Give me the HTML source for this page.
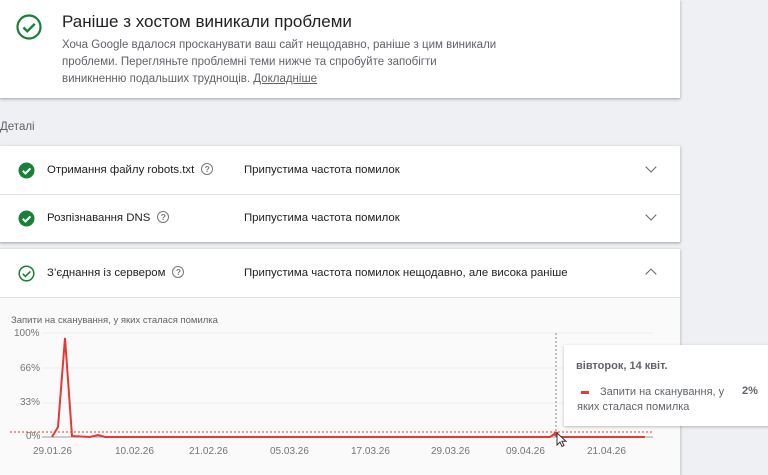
<!DOCTYPE html>
<html><head><meta charset="utf-8"><style>
*{margin:0;padding:0;box-sizing:border-box}
html,body{width:768px;height:475px;overflow:hidden}
body{background:#eef0f4;font-family:"Liberation Sans",sans-serif;position:relative;color:#202124}
.card{position:absolute;left:0;width:680px;background:#fff;box-shadow:0 1px 2px rgba(60,64,67,.3),0 1px 3px 1px rgba(60,64,67,.12)}
.a{position:absolute;white-space:nowrap}
.row{font-size:11.4px;color:#202124}
.q{display:inline-block;width:12px;height:12px;border:1.3px solid #777;border-radius:50%;font-size:8.5px;line-height:10px;text-align:center;color:#777;vertical-align:middle;margin-left:7px;margin-top:-2px;font-weight:bold}
.chev{position:absolute;left:647px;width:8px;height:8px;border-right:1.6px solid #5f6368;border-bottom:1.6px solid #5f6368}
.ax{font-size:10px;color:#757575;position:absolute}
</style></head><body>
<div class="card" style="top:0;height:98px">
<svg class="a" style="left:15px;top:13px" width="28" height="28" viewBox="0 0 28 28"><circle cx="14" cy="14" r="11.5" fill="none" stroke="#188038" stroke-width="2.2"/><path d="M8.5 14.5l3.8 3.8 7.5-7.5" fill="none" stroke="#188038" stroke-width="2.4"/></svg>
<div class="a" style="left:62px;top:12px;font-size:17px;color:#202124">Раніше з хостом виникали проблеми</div>
<div class="a" style="left:62px;top:37px;font-size:11.5px;color:#5f6368;line-height:17px;white-space:normal;width:440px">Хоча Google вдалося просканувати ваш сайт нещодавно, раніше з цим виникали проблеми. Перегляньте проблемні теми нижче та спробуйте запобігти виникненню подальших труднощів. <u>Докладніше</u></div>
</div>
<div class="a" style="left:0;top:121px;font-size:11.5px;color:#5f6368">Деталі</div>
<div class="card" style="top:146px;height:96px">
<div style="position:absolute;left:0;top:48px;width:680px;height:1px;background:#e0e0e0"></div>
</div>
<svg class="a" style="left:18px;top:162px" width="17" height="17"><circle cx="8.5" cy="8.5" r="8" fill="#188038"/><path d="M4.8 8.8l2.6 2.6 5-5" fill="none" stroke="#fff" stroke-width="2"/></svg>
<div class="a row" style="left:47px;top:164px">Отримання файлу robots.txt<span class="q">?</span></div>
<div class="a row" style="left:244px;top:164px">Припустима частота помилок</div>
<div class="chev" style="top:163px;transform:rotate(45deg)"></div>
<svg class="a" style="left:18px;top:210px" width="17" height="17"><circle cx="8.5" cy="8.5" r="8" fill="#188038"/><path d="M4.8 8.8l2.6 2.6 5-5" fill="none" stroke="#fff" stroke-width="2"/></svg>
<div class="a row" style="left:47px;top:212px">Розпізнавання DNS<span class="q">?</span></div>
<div class="a row" style="left:244px;top:212px">Припустима частота помилок</div>
<div class="chev" style="top:211px;transform:rotate(45deg)"></div>
<div class="card" style="top:249px;height:226px">
<div style="position:absolute;left:0;top:48px;width:680px;height:178px;background:#fafafa;border-top:1px solid #e0e0e0"></div>
</div>
<svg class="a" style="left:18px;top:265px" width="17" height="17"><circle cx="8.5" cy="8.5" r="7.3" fill="none" stroke="#188038" stroke-width="1.5"/><path d="M4.8 8.8l2.6 2.6 5-5" fill="none" stroke="#188038" stroke-width="1.6"/></svg>
<div class="a row" style="left:47px;top:267px">З’єднання із сервером<span class="q">?</span></div>
<div class="a row" style="left:244px;top:267px">Припустима частота помилок нещодавно, але висока раніше</div>
<div class="chev" style="top:270px;transform:rotate(-135deg)"></div>
<div class="a" style="left:11px;top:315px;font-size:9.5px;color:#5f6368">Запити на сканування, у яких сталася помилка</div>
<div class="ax" style="left:14px;top:328px">100%</div>
<div class="ax" style="left:20px;top:363px">66%</div>
<div class="ax" style="left:20px;top:397px">33%</div>
<div class="ax" style="left:26px;top:431px">0%</div>
<svg class="a" style="left:0;top:300px" width="680" height="175">
<g stroke="#eeeeee" stroke-width="1"><line x1="42" y1="33" x2="653" y2="33"/><line x1="42" y1="68" x2="653" y2="68"/><line x1="42" y1="103" x2="653" y2="103"/></g>
<line x1="42" y1="137" x2="653" y2="137" stroke="#9e9e9e" stroke-width="1"/>
<line x1="10" y1="132" x2="653" y2="132" stroke="#e53935" stroke-width="1" stroke-dasharray="2,2"/>
<line x1="556" y1="33" x2="556" y2="137" stroke="#888" stroke-width="1" stroke-dasharray="2,2"/>
<polyline fill="none" stroke="#e53935" stroke-width="2" points="52,137 58,127 65,38 72,136 90,137 98,135 105,137 550,137 556,133 560,137 645,137"/>
<circle cx="556" cy="134" r="2.5" fill="#e53935"/>
</svg>
<div class="ax" style="left:33px;top:446px">29.01.26</div>
<div class="ax" style="left:115px;top:446px">10.02.26</div>
<div class="ax" style="left:189px;top:446px">21.02.26</div>
<div class="ax" style="left:270px;top:446px">05.03.26</div>
<div class="ax" style="left:351px;top:446px">17.03.26</div>
<div class="ax" style="left:431px;top:446px">29.03.26</div>
<div class="ax" style="left:506px;top:446px">09.04.26</div>
<div class="ax" style="left:587px;top:446px">21.04.26</div>
<div class="a" style="left:564px;top:345px;width:210px;height:81px;background:#fff;box-shadow:0 1px 3px rgba(0,0,0,.25)">
<div class="a" style="left:12px;top:15px;font-size:11px;font-weight:bold;color:#5f6368">вівторок, 14 квіт.</div>
<div class="a" style="left:17px;top:46px;width:8px;height:3px;background:#e53935"></div>
<div class="a" style="left:13px;top:40px;font-size:11px;color:#5f6368;line-height:15px;white-space:normal;width:150px;text-indent:23px">Запити на сканування, у яких сталася помилка</div>
<div class="a" style="left:178px;top:40px;font-size:11px;font-weight:bold;color:#5f6368">2%</div>
</div>
<svg class="a" style="left:556px;top:432px" width="12" height="16"><path d="M1 1v12l3-3 2 4.5 2-1-2-4.3h4z" fill="#fff" stroke="#333" stroke-width="1"/></svg>
</body></html>
